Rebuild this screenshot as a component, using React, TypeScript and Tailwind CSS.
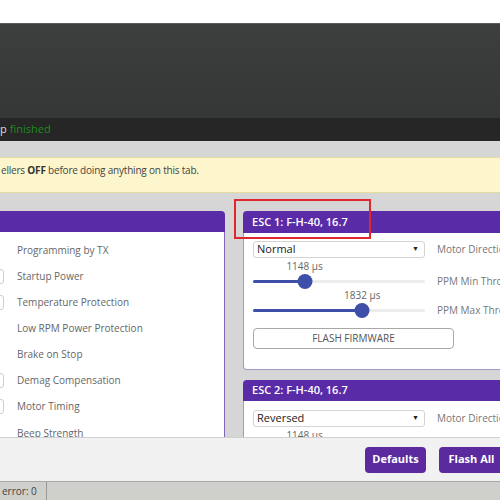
import React from "react";

/**
 * BLHeli-style ESC configuration page (cropped viewport)
 */

const font = { fontFamily: '"Open Sans", "Noto Sans", sans-serif' };

type Row = { label: string; box?: boolean };

const leftRows: Row[] = [
  { label: "Programming by TX" },
  { label: "Startup Power", box: true },
  { label: "Temperature Protection", box: true },
  { label: "Low RPM Power Protection" },
  { label: "Brake on Stop" },
  { label: "Demag Compensation", box: true },
  { label: "Motor Timing", box: true },
];

function Slider({ value, pct }: { value: number; pct: number }) {
  return (
    <div className="flex h-[29px] w-[172px] flex-col">
      <div className="relative h-[13px]">
        <span
          className="absolute top-0 -translate-x-1/2 whitespace-nowrap text-[10px] leading-[13px] text-[#666]"
          style={{ left: `${pct}%` }}
        >
          {value} µs
        </span>
      </div>
      <div className="relative flex h-[16px] items-center">
        <div className="h-[3px] w-full rounded-full bg-[#ececec]" />
        <div
          className="absolute left-0 h-[3px] rounded-full bg-[#3f4ea6]"
          style={{ width: `${pct}%` }}
        />
        <div
          className="absolute h-[15px] w-[15px] -translate-x-1/2 rounded-full bg-[#3f4ea6]"
          style={{ left: `${pct}%` }}
        />
      </div>
    </div>
  );
}

function Select({ value }: { value: string }) {
  return (
    <div className="flex h-[17px] w-[172px] items-center justify-between rounded-[3px] border border-[#d4d4d4] bg-white pl-[3px] pr-[5px]">
      <span className="text-[11px] text-[#222]">{value}</span>
      <span className="text-[7px] text-[#222]">▼</span>
    </div>
  );
}

function SideLabel({ children }: { children: React.ReactNode }) {
  return (
    <span className="whitespace-nowrap text-[10px] text-[#777]">{children}</span>
  );
}

export default function App() {
  return (
    <div
      className="relative flex h-[500px] w-[500px] flex-col overflow-hidden bg-white"
      style={font}
    >
      {/* Top white strip */}
      <div className="h-[23px] shrink-0 bg-white" />

      {/* Dark header area */}
      <div className="h-[95px] shrink-0 border-t border-[#5a5c5b] bg-gradient-to-b from-[#3d3f3e] to-[#353736]" />

      {/* Log line */}
      <div className="flex h-[23px] shrink-0 items-center bg-[#262626] text-[11px]">
        <span className="text-[#ddd]">p</span>
        <span className="ml-[3px] text-[#1f8a1f]">finished</span>
      </div>

      {/* Content */}
      <div className="h-[296px] shrink-0 overflow-hidden bg-[#d6d6d6] pt-[16px]">
        {/* Note */}
        <div className="h-[36px] border-y border-[#e6dca0] bg-[#fdf5cc] pl-[1px] pt-[5px] text-[10px] leading-[14px] tracking-[-0.2px] text-[#444]">
          ellers <b className="font-bold text-[#333]">OFF</b> before doing anything on this tab.
        </div>

        {/* Panels */}
        <div className="mt-[18px] flex gap-[18px]">
          {/* Left panel: common settings */}
          <div className="-ml-[200px] w-[425px] shrink-0">
            <div className="h-[21px] rounded-t-[4px] bg-[#5a2ba6]" />
            <div className="h-[240px] border-x border-[#7f66b8] bg-white pt-[5px]">
              {leftRows.map((r) => (
                <div key={r.label} className="flex h-[26px] items-center">
                  <div className="flex w-[203px] justify-end">
                    {r.box && (
                      <div className="h-[15px] w-[30px] rounded-[3px] border border-[#cfcfcf] bg-white" />
                    )}
                  </div>
                  <span className="ml-[13px] text-[10px] text-[#666]">{r.label}</span>
                </div>
              ))}
              <div className="mt-[4px] flex h-[20px] items-center">
                <div className="w-[203px]" />
                <span className="ml-[13px] text-[10px] text-[#666]">Beep Strength</span>
              </div>
            </div>
          </div>

          {/* Right column: ESC panels */}
          <div className="flex w-[400px] shrink-0 flex-col gap-[10px]">
            {/* ESC 1 */}
            <div>
              <div className="flex h-[22px] items-center rounded-t-[4px] bg-[#5a2ba6] pl-[9px] text-[11px] font-semibold text-white">
                ESC 1: F-H-40, 16.7
              </div>
              <div className="rounded-b-[4px] border-x border-b border-[#a597c6] bg-white pb-[20px] pl-[9px] pt-[8px]">
                <div className="flex items-center gap-[12px]">
                  <Select value="Normal" />
                  <SideLabel>Motor Direction</SideLabel>
                </div>
                <div className="mt-[2px] flex items-end gap-[12px]">
                  <Slider value={1148} pct={30} />
                  <div className="flex h-[16px] items-center">
                    <SideLabel>PPM Min Throttle</SideLabel>
                  </div>
                </div>
                <div className="flex items-end gap-[12px]">
                  <Slider value={1832} pct={63.5} />
                  <div className="flex h-[16px] items-center">
                    <SideLabel>PPM Max Throttle</SideLabel>
                  </div>
                </div>
                <button className="mt-[10px] flex h-[21px] w-[201px] items-center justify-center rounded-[4px] border border-[#a8a8a8] bg-white text-[10px] text-[#555]">
                  FLASH FIRMWARE
                </button>
              </div>
            </div>

            {/* ESC 2 */}
            <div>
              <div className="flex h-[21px] items-center rounded-t-[4px] bg-[#5a2ba6] pl-[9px] text-[11px] font-semibold text-white">
                ESC 2: F-H-40, 16.7
              </div>
              <div className="border-x border-[#a597c6] bg-white pl-[9px] pt-[9px]">
                <div className="flex items-center gap-[12px]">
                  <Select value="Reversed" />
                  <SideLabel>Motor Direction</SideLabel>
                </div>
                <div className="mt-[2px] flex items-end gap-[12px]">
                  <Slider value={1148} pct={30} />
                </div>
              </div>
            </div>
          </div>
        </div>
      </div>

      {/* Action footer */}
      <div className="flex h-[44px] shrink-0 items-center justify-end gap-[13px] border-t border-[#d0d0d0] bg-[#f1f1f1] pr-0">
        <button className="h-[26px] w-[61px] rounded-[4px] bg-[#5a2a9e] text-[11px] font-bold text-white">
          Defaults
        </button>
        <button className="-mr-[4px] h-[26px] w-[65px] rounded-[4px] bg-[#5a2a9e] text-[11px] font-bold text-white">
          Flash All
        </button>
      </div>

      {/* Status bar */}
      <div className="flex h-[19px] shrink-0 items-center border-t border-[#a9a9a5] bg-[#cfcfcb] text-[10px] text-[#444]">
        <span className="w-[47px] border-r border-[#9a9a96] pl-[2px] leading-[19px]">error: 0</span>
      </div>

      {/* Red highlight annotation */}
      <div className="pointer-events-none absolute left-[234px] top-[199px] h-[40px] w-[137px] border-2 border-[#e0262e]" />
    </div>
  );
}
